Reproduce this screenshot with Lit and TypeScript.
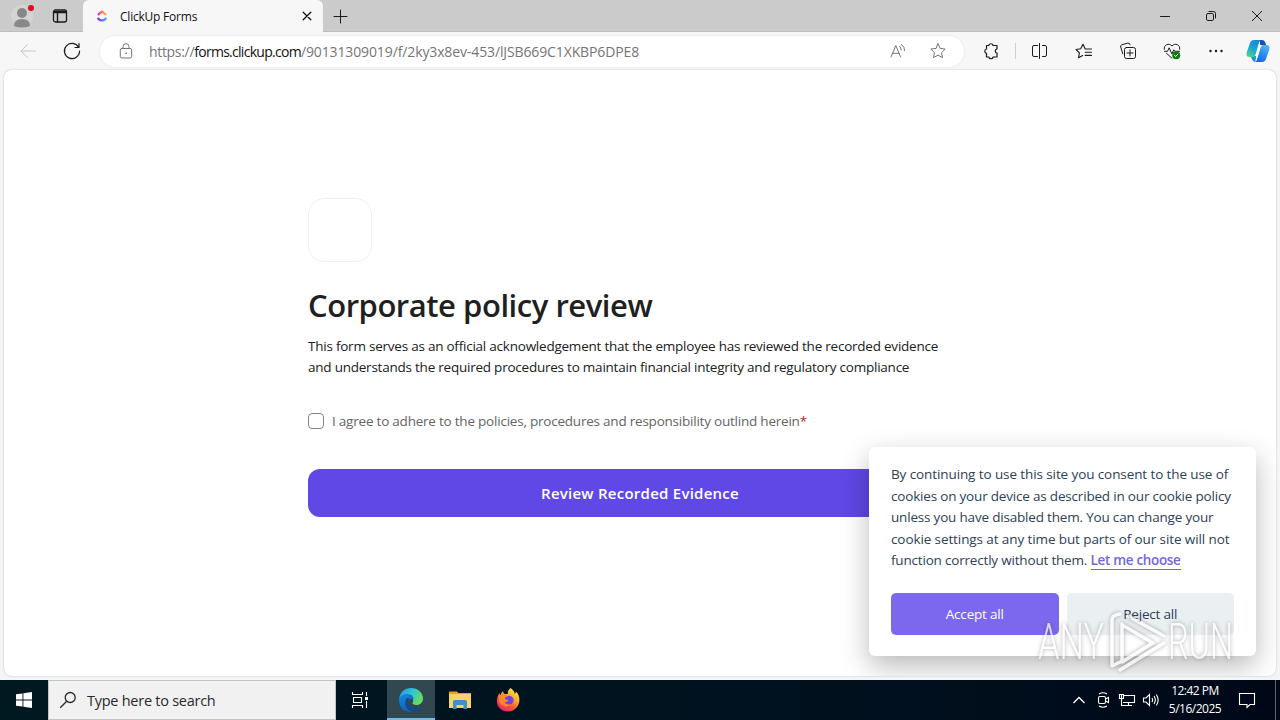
import { LitElement, html, css } from 'lit';
import { customElement } from 'lit/decorators.js';

@customElement('browser-bar')
class BrowserBar extends LitElement {
  static styles = css`
    :host {
      display: block;
      color: #1b1b1b;
    }

    svg {
      display: block;
      fill: none;
      stroke: currentColor;
      stroke-width: 1;
      stroke-linecap: round;
      stroke-linejoin: round;
    }

    .tabs {
      display: flex;
      height: 32px;
      background: #cbcbcb;
      box-shadow: inset 0 -1px #bebebe;
    }

    .slot {
      display: flex;
      align-items: center;
      justify-content: center;
      flex: none;
      width: 44px;
    }

    .profile {
      width: 44px;
    }

    .workspaces {
      width: 32px;
    }

    .tab {
      display: flex;
      align-items: center;
      box-sizing: border-box;
      width: 240px;
      margin-left: 7px;
      padding: 0 8px 0 12px;
      gap: 11px;
      border-radius: 6px 6px 0 0;
      background: #f7f7f7;
      font-size: 12px;
      letter-spacing: -0.22px;
      color: #111;
    }

    .title {
      flex: 1;
    }

    .add {
      width: 34px;
    }

    .controls {
      display: flex;
      margin-left: auto;
    }

    .controls .slot {
      width: 46px;
    }

    .toolbar {
      display: flex;
      height: 38px;
      padding-left: 6px;
      align-items: center;
      background: #f7f7f7;
    }

    .back {
      color: #c6c6c6;
    }

    .address {
      display: flex;
      align-items: center;
      box-sizing: border-box;
      width: 864px;
      height: 31px;
      margin: 0 5px 0 6px;
      padding: 0 6px 0 4px;
      border-radius: 16px;
      background: #fff;
      box-shadow: 0 0 2px #ddd;
      color: #757575;
      font-size: 14px;
    }

    .url {
      flex: 1;
      padding-left: 1px;
      white-space: nowrap;
      letter-spacing: -0.12px;
    }

    .scheme {
      letter-spacing: -0.32px;
    }

    .host {
      letter-spacing: -0.72px;
      color: #111;
    }

    .address .tool {
      width: 40px;
    }

    .divider {
      width: 1px;
      height: 16px;
      margin: 0 2px;
      background: #cfcfcf;
    }

    .copilot {
      width: 40px;
    }
  `;

  render() {
    return html`
      <div class="tabs">
        <div class="slot profile">
          <svg width="28" height="28" viewBox="0 0 28 28">
            <g stroke="none">
              <circle cx="14" cy="14" r="11" fill="#d6d3d0" />
              <circle cx="14" cy="11" r="5" fill="#8a8886" />
              <path d="M6 24q0-7 8-7t8 7q-8 3-16 0z" fill="#8a8886" />
              <circle cx="23" cy="6" r="4.2" fill="#cbcbcb" />
              <circle cx="23" cy="6" r="3" fill="#e00b1c" />
            </g>
          </svg>
        </div>
        <div class="slot workspaces">
          <svg width="16" height="16" viewBox="0 0 16 16">
            <rect x="1.5" y="2" width="13" height="12" rx="2" stroke-width="1.3" />
            <path d="M2 3.6h12M2 4.6h12M5.5 5v9" stroke-width="1.4" />
          </svg>
        </div>
        <div class="tab">
          <svg width="14" height="14" viewBox="0 0 14 14">
            <defs>
              <linearGradient id="warm"><stop stop-color="#f02fb0" /><stop offset="1" stop-color="#ffb02e" /></linearGradient>
              <linearGradient id="cool"><stop stop-color="#8533e8" /><stop offset="1" stop-color="#3aaef5" /></linearGradient>
            </defs>
            <path d="M3.500 5.300 7 2.500l3.500 2.800" stroke="url(#warm)" stroke-width="2.2" />
            <path d="M3.200 9.600q3.800 3.800 7.600 0" stroke="url(#cool)" stroke-width="2.2" />
          </svg>
          <span class="title">ClickUp Forms</span>
          <svg width="16" height="16" viewBox="0 0 16 16"><path d="m4.2 4.2 7.6 7.6m0-7.6-7.6 7.6" stroke-width="1.3" /></svg>
        </div>
        <div class="slot add">
          <svg width="16" height="16" viewBox="0 0 16 16"><path d="M8.5 2v13M2 8.5h13" /></svg>
        </div>
        <div class="controls">
          <div class="slot"><svg width="12" height="12" viewBox="0 0 12 12"><path d="M1.5 6.5h9" /></svg></div>
          <div class="slot">
            <svg width="12" height="12" viewBox="0 0 12 12"><rect x="1.5" y="3.5" width="7" height="7" rx="1.4" /><path d="M4 1.5h4.5q2 0 2 2V8" /></svg>
          </div>
          <div class="slot"><svg width="12" height="12" viewBox="0 0 12 12"><path d="m1.3 1.3 9.4 9.4m0-9.4-9.4 9.4" /></svg></div>
        </div>
      </div>
      <div class="toolbar">
        <div class="slot back">
          <svg width="20" height="20" viewBox="0 0 20 20"><path d="M17.5 10H3m6.5-6.5L3 10l6.5 6.5" /></svg>
        </div>
        <div class="slot">
          <svg width="20" height="20" viewBox="0 0 20 20"><path d="M16.6 6.2A7.6 7.6 0 1 0 17.6 10M17 2.5v4h-4" stroke-width="1.2" /></svg>
        </div>
        <div class="address">
          <div class="slot">
            <svg width="18" height="18" viewBox="0 0 18 18">
              <rect x="3.3" y="6.5" width="11.4" height="9.5" rx="1.6" />
              <path d="M6 6.5V4.7a3 3 0 0 1 6 0v1.8" />
              <circle cx="9" cy="11.3" r=".5" />
            </svg>
          </div>
          <span class="url"><span class="scheme">https://</span><span class="host">forms.clickup.com</span>/90131309019/f/2ky3x8ev-453/lJSB669C1XKBP6DPE8</span>
          <div class="slot tool">
            <svg width="18" height="18" viewBox="0 0 18 18">
              <path d="m2 15 4.8-11.5L11.6 15M3.6 11.3H10M10.7 4.3q1.7 1.5 1.5 3.7M12.6 2.5q3.3 2.6 3 6" />
            </svg>
          </div>
          <div class="slot tool">
            <svg width="18" height="18" viewBox="0 0 18 18">
              <path d="m9 1.8 2.2 4.6 5 .7-3.6 3.5.9 5L9 13.2l-4.5 2.4.9-5-3.6-3.5 5-.7z" />
            </svg>
          </div>
        </div>
        <div class="slot">
          <svg width="18" height="18" viewBox="0 0 18 18">
            <path d="M4.500 3.500h2.300a2.200 2.200 0 0 1 4.300 0H15v3.300a2.200 2.200 0 0 0 0 4.300V15h-3.900a2.200 2.200 0 0 1-4.300 0H4.500v-3.700a2.200 2.200 0 0 1 0-4.300z" stroke-width="1.200" />
          </svg>
        </div>
        <div class="divider"></div>
        <div class="slot">
          <svg width="18" height="18" viewBox="0 0 18 18"><path d="M6.500 3.500H3Q1.500 3.500 1.500 5v8q0 1.500 1.500 1.500h3.500M11.500 3.500H14q1.500 0 1.500 1.500v8q0 1.500-1.500 1.500h-2.500M8.500 1.500v15" /></svg>
        </div>
        <div class="slot">
          <svg width="18" height="18" viewBox="0 0 18 18">
            <path d="M10.200 7 8 2.300 5.700 6.800l-4.700.7 3.400 3.400-.8 4.800 4.100-2.200M10.200 7h6.300M10.200 10.200h6.300M10.200 13.400h6.300" stroke-width="1.100" />
          </svg>
        </div>
        <div class="slot">
          <svg width="18" height="18" viewBox="0 0 18 18">
            <rect x="5.500" y="5.500" width="11" height="11" rx="2" />
            <path d="M11 8v6M8 11h6M3.800 11.800 1.700 5q-.5-1.700 1.100-2.200l6-1.700q1.800-.5 2.400 1.700" />
          </svg>
        </div>
        <div class="slot">
          <svg width="18" height="18" viewBox="0 0 18 18">
            <path d="M1.300 7.300C.5 2.500 6 .5 9 4c3-3.500 8.500-1.500 7.700 3.300M1.500 9.300h3l1.700-3.500 2.600 6 2-4 1 1.500h4.700M3.500 11.300 9 16.200" />
            <circle cx="13.200" cy="13.200" r="4" fill="#107c10" stroke="none" />
            <path d="m11.500 13.400 1.200 1.100 2.200-2.400" stroke="#fff" />
          </svg>
        </div>
        <div class="slot">
          <svg width="18" height="18" viewBox="0 0 18 18">
            <g fill="currentColor" stroke="none"><circle cx="3.500" cy="9" r="1.200" /><circle cx="9" cy="9" r="1.200" /><circle cx="14.500" cy="9" r="1.200" /></g>
          </svg>
        </div>
        <div class="slot copilot">
          <svg width="26" height="26" viewBox="0 0 26 26">
            <defs>
              <linearGradient id="left" x1=".7" y1="0" x2=".2" y2="1"><stop stop-color="#1684dc" /><stop offset=".5" stop-color="#16a8d0" /><stop offset="1" stop-color="#55cf8b" /></linearGradient>
              <linearGradient id="right" x1=".7" y1="0" x2=".3" y2="1"><stop stop-color="#52b4f6" /><stop offset="1" stop-color="#1268e0" /></linearGradient>
            </defs>
            <g stroke="none">
              <path d="M15 2h2q3 0 4 5h-6z" fill="#174fb5" />
              <path d="M16.500 2H9Q5.800 2 4.600 6L1.700 14.500Q.5 19 4.500 19h3q2.500 0 3.200-3l3-10.500Q14.500 2 16.500 2z" fill="url(#left)" />
              <path d="M9.500 24H17q3.200 0 4.400-4l2.900-8.500Q25.500 7 21.500 7h-3q-2.500 0-3.200 3l-3 10.500Q11.500 24 9.500 24z" fill="url(#right)" />
              <path d="M6 19h2q2.500-.3 3.300-3l-1 7.900Q8 24 7 21z" fill="#1590dc" />
              <path d="M13.400 8h3q-1 1-1.500 3l-2 7h-3q1-1 1.500-3z" fill="#fff" />
            </g>
          </svg>
        </div>
      </div>
    `;
  }
}

@customElement('policy-form')
class PolicyForm extends LitElement {
  static styles = css`
    :host {
      display: block;
      width: 664px;
      margin: 0 auto;
      padding-top: 128px;
    }

    .logo {
      box-sizing: border-box;
      width: 64px;
      height: 64px;
      border: 1px solid #f0f0f0;
      border-radius: 16px;
    }

    h1 {
      margin: 22px 0 10px;
      color: #202020;
      font-size: 31px;
      font-weight: 600;
      line-height: 42px;
      letter-spacing: -0.46px;
    }

    p {
      margin: 0;
      color: #202020;
      font-size: 13.5px;
      line-height: 21px;
      letter-spacing: -0.23px;
      white-space: nowrap;
    }

    .agree {
      display: flex;
      align-items: center;
      height: 20px;
      margin-top: 33px;
      gap: 8px;
      color: #646464;
      font-size: 13.5px;
      letter-spacing: -0.22px;
    }

    .check {
      box-sizing: border-box;
      width: 16px;
      height: 16px;
      border: 1px solid #838383;
      border-radius: 4px;
    }

    .required {
      color: #b3261e;
    }

    .submit {
      display: flex;
      align-items: center;
      justify-content: center;
      width: 100%;
      height: 48px;
      margin-top: 38px;
      border: 0;
      border-radius: 12px;
      background: #5f48e6;
      color: #fff;
      font: 600 15px 'Open Sans', 'Noto Sans', sans-serif;
      letter-spacing: 0.25px;
    }
  `;

  render() {
    return html`
      <div class="logo"></div>
      <h1>Corporate policy review</h1>
      <p>
        This form serves as an official acknowledgement that the employee has reviewed the recorded evidence<br />
        and understands the required procedures to maintain financial integrity and regulatory compliance
      </p>
      <div class="agree">
        <span class="check"></span>
        <span>I agree to adhere to the policies, procedures and responsibility outlind herein<span class="required">*</span></span>
      </div>
      <button class="submit">Review Recorded Evidence</button>
    `;
  }
}

@customElement('cookie-banner')
class CookieBanner extends LitElement {
  static styles = css`
    :host {
      display: block;
      box-sizing: border-box;
      width: 387px;
      height: 209px;
      padding: 17px 22px 21px;
      border-radius: 6px;
      background: #fff;
      box-shadow: 0 10px 28px rgba(2, 2, 3, 0.28);
      color: #2d4156;
    }

    p {
      margin: 0 0 21px;
      font-size: 13.5px;
      line-height: 21.6px;
      letter-spacing: -0.1px;
      white-space: nowrap;
    }

    .tight {
      letter-spacing: -0.19px;
    }

    a {
      border-bottom: 1px solid #7866d8;
      color: #7866d8;
      font-weight: 600;
      letter-spacing: -0.32px;
    }

    .buttons {
      display: flex;
      gap: 8px;
    }

    button {
      flex: 1;
      height: 42px;
      border: 0;
      border-radius: 5px;
      background: #eaeff2;
      color: #2d4156;
      font: 13.5px 'Open Sans', 'Noto Sans', sans-serif;
      letter-spacing: -0.2px;
    }

    .accept {
      background: #7b68ee;
      color: #fff;
    }
  `;

  render() {
    return html`
      <p>
        By continuing to use this site you consent to the use of<br />
        <span class="tight">cookies on your device as described in our cookie policy</span><br />
        <span class="tight">unless you have disabled them. You can change your</span><br />
        cookie settings at any time but parts of our site will not<br />
        <span class="tight">function correctly without them. <a>Let me choose</a></span>
      </p>
      <div class="buttons">
        <button class="accept">Accept all</button>
        <button>Reject all</button>
      </div>
    `;
  }
}

@customElement('task-bar')
class TaskBar extends LitElement {
  static styles = css`
    :host {
      display: flex;
      height: 40px;
      background: linear-gradient(90deg, #001820, #00121f 60%, #000818);
      color: #fff;
    }

    svg {
      display: block;
      fill: none;
      stroke: currentColor;
      stroke-width: 1.1;
    }

    .slot {
      display: flex;
      align-items: center;
      justify-content: center;
      flex: none;
      width: 48px;
    }

    .search {
      display: flex;
      align-items: center;
      box-sizing: border-box;
      width: 288px;
      padding-left: 10px;
      gap: 10px;
      border: 1px solid #c4c4c4;
      background: #f1f1f1;
      color: #2a2a2a;
      font-size: 14.5px;
      letter-spacing: -0.26px;
    }

    .active {
      margin: 0 1px 0 3px;
      background: #324850;
      box-shadow: inset 0 -2px #76b9ed;
    }

    .tray {
      display: flex;
      margin-left: auto;
    }

    .tray .slot {
      width: 24px;
    }

    .clock {
      display: flex;
      flex-direction: column;
      align-items: center;
      width: 64px;
      padding-top: 2px;
      font-size: 12px;
      line-height: 18px;
      letter-spacing: -0.5px;
      white-space: nowrap;
    }

    .tray .notify {
      width: 40px;
    }

    .peek {
      width: 4px;
      margin-left: 8px;
      border-left: 1px solid #5a626c;
    }
  `;

  render() {
    return html`
      <div class="slot">
        <svg width="16" height="16" viewBox="0 0 16 16"><path d="M0 2.300 6.500 1.400v6.200H0zM7.400 1.300 16 0v7.600H7.400zM0 8.400h6.500v6.200L0 13.700zM7.400 8.400H16V16l-8.600-1.300z" fill="#fff" stroke="none" /></svg>
      </div>
      <div class="search">
        <svg width="18" height="18" viewBox="0 0 18 18"><circle cx="11.200" cy="6.500" r="5" stroke-width="1.300" /><path d="M7.700 10.200 1.200 16.700" stroke-width="1.300" /></svg>
        <span>Type here to search</span>
      </div>
      <div class="slot">
        <svg width="18" height="18" viewBox="0 0 18 18">
          <path d="M1.500 1v2.500h10V1M1.500 17v-2.500h10V17M2.500 6.500h8v5h-8zM15.500 1v4M15.500 10v7" />
          <path d="M14 6h3v3h-3z" fill="#fff" stroke="none" />
        </svg>
      </div>
      <div class="slot active">
        <svg width="26" height="26" viewBox="0 0 26 26">
          <defs>
            <linearGradient id="sea" x1="0" y1="0" x2="1" y2=".4"><stop stop-color="#2196e3" /><stop offset=".55" stop-color="#30c3d8" /><stop offset="1" stop-color="#63dc60" /></linearGradient>
            <linearGradient id="deep" x1="0" y1="0" x2=".6" y2="1"><stop stop-color="#1689dd" /><stop offset="1" stop-color="#1457b5" /></linearGradient>
          </defs>
          <g stroke="none">
            <path d="M1.200 11.500C2 5 7 1 13 1c7 0 12 5 12 10.500 0 4-3 6.500-6.500 6.500-3 0-4.500-1-4-2.200 1.500-2 .8-6.800-5-6.800-4 0-7 1-8.300 2.500z" fill="url(#sea)" />
            <path d="M1 12.500C1.800 8.500 5.500 7 9.500 7c4.500 0 6.500 3 6 5.300-3.800-2-6.500 1.700-5 5.200 2 4.500 8 5.500 12.500 2C20.500 23.500 17 25 13 25 6 25 .5 19.500 1 12.500z" fill="url(#deep)" />
            <path d="M9 11c-4 5-1 12 5.500 13.900C20 24.500 22 22 23.400 19.600c-4.500 2.700-11 1.700-12.900-2.600C9.300 14 11 12 12 11.300z" fill="#114a8b" />
          </g>
        </svg>
      </div>
      <div class="slot">
        <svg width="24" height="24" viewBox="0 0 24 24">
          <g stroke="none">
            <path d="M1 3.500h8l1.500 1.500H23v4H1z" fill="#e9a21b" />
            <path d="M1 6h22v14H1z" fill="#fbd36a" />
            <path d="M5 21v-7q0-2 2-2h10q2 0 2 2v7h-3.500v-4h-7v4z" fill="#3e8fca" />
          </g>
        </svg>
      </div>
      <div class="slot">
        <svg width="26" height="26" viewBox="0 0 26 26">
          <defs>
            <linearGradient id="fire" x1=".8" y1="0" x2=".2" y2="1"><stop stop-color="#fff04a" /><stop offset=".35" stop-color="#ffab2e" /><stop offset=".65" stop-color="#ff5634" /><stop offset="1" stop-color="#e81e7e" /></linearGradient>
          </defs>
          <g stroke="none">
            <path d="M15.500 1c3 2 4 4 4.300 6q1-1 1-2.500C28 11 24 24.500 13 24.500 6 24.500 1.500 19.500 2 13c.2-3 1-5 2.700-7q0 1.700.8 2.500C6 6 7.200 4.700 8 4q0 2 1.500 3H13q-1-3 2.500-6z" fill="url(#fire)" />
            <circle cx="14" cy="13.300" r="4.600" fill="#7146dc" />
            <path d="M4.500 8.500Q9 6 13 9.500q-3.500.3-3.500 2 1 1.500 4 1.500-1 2.500-4.500 2.500 2.500 3 7 1.500-3 4-8 1.500T4.500 8.500z" fill="#ff8a2c" />
          </g>
        </svg>
      </div>
      <div class="tray">
        <div class="slot"><svg width="14" height="14" viewBox="0 0 14 14"><path d="m1.500 10 5.500-5.500 5.500 5.500" stroke-width="1.300" /></svg></div>
        <div class="slot">
          <svg width="16" height="18" viewBox="0 0 16 18"><rect x="3.500" y="5.500" width="7" height="7" rx="1.500" /><path d="m10.500 8 3-1.500v5l-3-1.500M4 3Q8 .5 12 3M4 15q4 2.500 8 0" /></svg>
        </div>
        <div class="slot">
          <svg width="18" height="18" viewBox="0 0 18 18"><path d="M6 4.500h10.500v7H5M10.500 11.500v3M6.500 14.500H14M1.500 3.500h4v4h-4zM3.500 7.500v7H7M3.500 4v3" /></svg>
        </div>
        <div class="slot">
          <svg width="18" height="18" viewBox="0 0 18 18"><path d="M1.500 7h2.500l3.500-3.500v11L4 11H1.500zM10 7q1.200 2 0 4M12 5q2.700 4 0 8M14.300 3.500q3.700 5.500 0 11" /></svg>
        </div>
        <div class="clock"><span>12:42 PM</span><span>5/16/2025</span></div>
        <div class="slot notify">
          <svg width="18" height="18" viewBox="0 0 18 18"><path d="M1.500 2.500h15v11h-4.500l-3 3v-3H1.500z" /></svg>
        </div>
        <div class="peek"></div>
      </div>
    `;
  }
}

@customElement('app-root')
class AppRoot extends LitElement {
  static styles = css`
    :host {
      display: flex;
      flex-direction: column;
      position: relative;
      width: 1280px;
      height: 720px;
      overflow: hidden;
      background: #f3f5f7;
      font-family: 'Open Sans', 'Noto Sans', sans-serif;
      font-variant-ligatures: none;
    }

    .page {
      flex: 1;
      position: relative;
      margin: 0 4px 4px;
      border-radius: 8px;
      background: #fff;
      box-shadow: 0 0 2px #bcbcbc;
      overflow: hidden;
    }

    cookie-banner {
      position: absolute;
      right: 20px;
      bottom: 20px;
    }

    .watermark {
      position: absolute;
      left: 1034px;
      top: 606px;
      fill: #fff;
      opacity: 0.72;
      filter: drop-shadow(0 0 2px rgba(60, 60, 60, 0.6));
    }

    .watermark text {
      font: 300 50px Roboto, sans-serif;
    }

    .mark {
      fill: none;
      stroke: #fff;
      stroke-width: 3.5;
      stroke-linejoin: round;
      stroke-linecap: round;
    }
  `;

  render() {
    return html`
      <browser-bar></browser-bar>
      <div class="page">
        <policy-form></policy-form>
        <cookie-banner></cookie-banner>
      </div>
      <task-bar></task-bar>
      <svg class="watermark" width="216" height="72" viewBox="0 0 216 72">
        <text x="4" y="53" textLength="66" lengthAdjust="spacingAndGlyphs">ANY</text>
        <path class="mark" d="M86 8q-8 1-8 6v46l8-4M88 18v38l29-18M94 10l36 20M90 20l29 17M86 64l44-27" />
        <text x="134" y="53" textLength="65" lengthAdjust="spacingAndGlyphs">RUN</text>
      </svg>
    `;
  }
}
